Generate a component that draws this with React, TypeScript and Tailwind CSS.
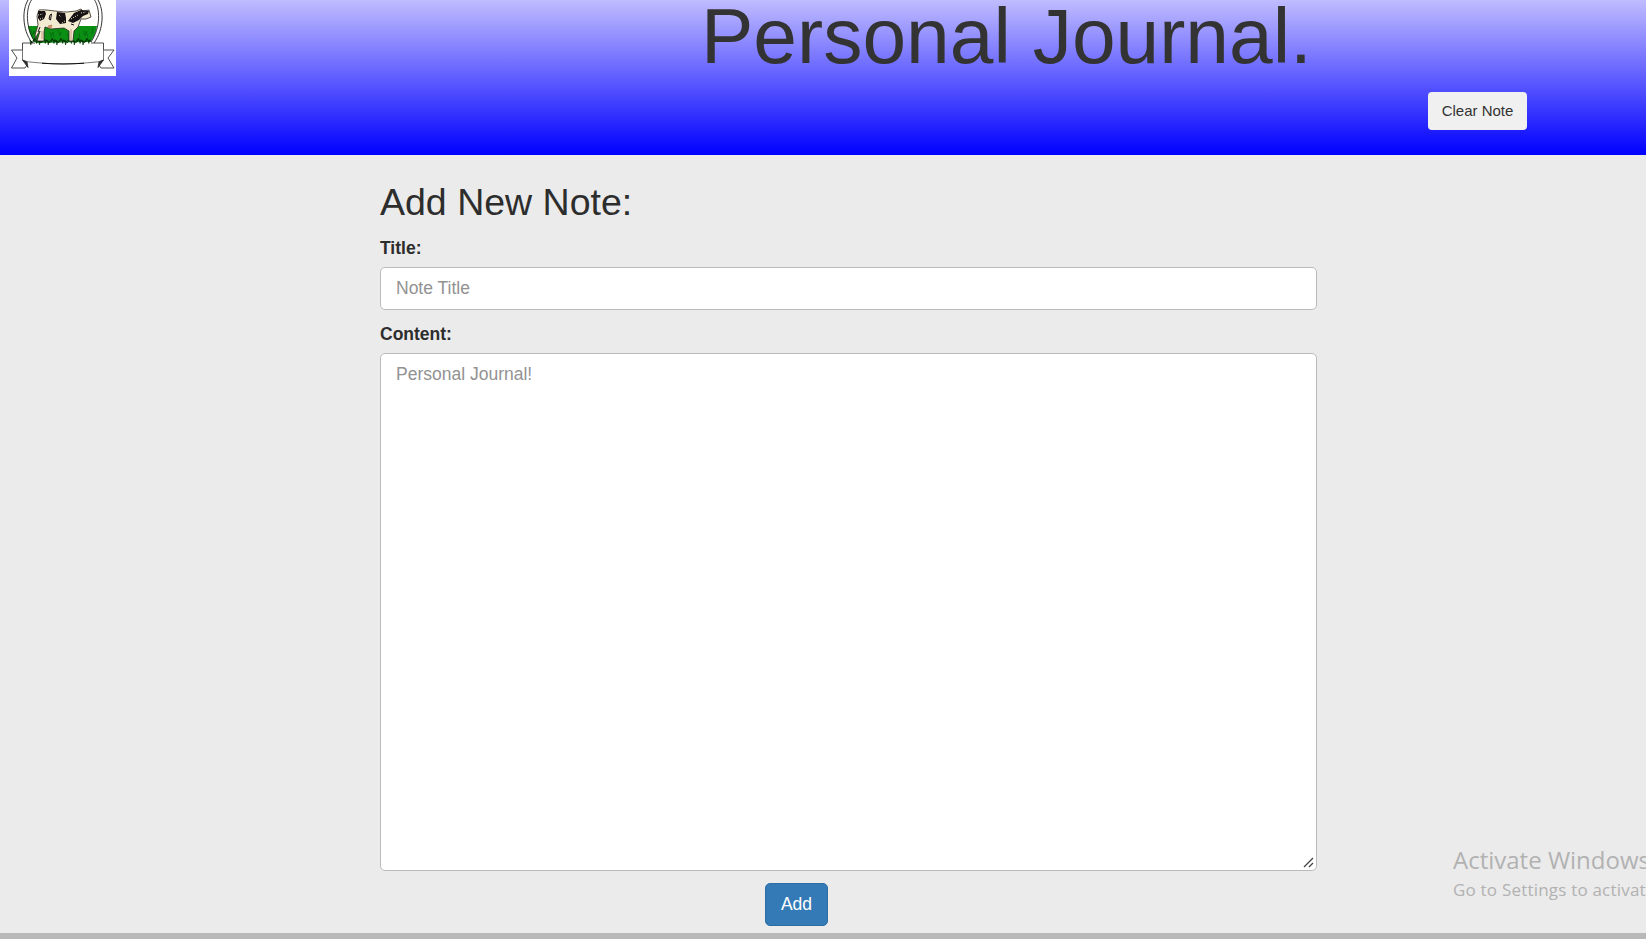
import React from "react";

const blades = Array.from({ length: 21 }, (_, i) => {
  const x = 21 + i * 2.9;
  const h = i % 3 === 0 ? 5 : i % 3 === 1 ? 2 : 3.5;
  return `M${x} 40l.8 ${h}l1-4l1 2z`;
}).join("");

function Logo() {
  return (
    <svg className="block h-[76px] w-[107px] bg-white" viewBox="0 0 107 76" fill="none">
      <path d="M19 26H88C87 33 84 39 81 42L27 43C23 39 20 33 19 26Z" fill="#0a8f14" />
      <path d="M22 30l2 5l1-4l2 6M41 32l1 5l2-5l1 6M49 30l2 6l1-4M58 33l2 6M74 30l2 6l1-5l2 6M70 33l1 6M84 28l-1 6" stroke="#056b0c" strokeWidth=".8" />
      <path d="M22.500 0C17 8 16 27 26 42M85.500 0C91 8 92 27 82 42" stroke="#222" strokeWidth=".9" />
      <path d="M19 0C13 10 13 29 23 43M89 0C95 10 95 29 85 43" stroke="#333" strokeWidth="1" />
      <path d={blades} fill="#063d08" stroke="#042e05" strokeWidth=".6" />
      <path
        d="M30 10C36 9 49 12 58 12L67 11L72 9L74 11L80 10L82 17L77 19L72 19L69 27L65 31L64 41H60L60 31L55 28L42 29L36 27L35 32L35 41H28L31 31L28 35L27 39L26 35L29 25L28 16Z"
        fill="#f3ead2"
        stroke="#2b2420"
        strokeWidth=".8"
      />
      <path d="M29 11L36 11L37 14L35 19L31 21L29 18ZM48 12L56 13L57 18L57 23L51 24L47 19ZM59 21L65 13L72 10L80 11L79 14L74 16L70 20L64 23Z" fill="#171214" />
      <path d="M41 15l1.500-1l-1 6l-1.500-1zM29 32l2-5M62 24l3 1" stroke="#171214" />
      <path d="M29 15l5-1M31 19l3-1M50 15l2 2M53 23l3-2M62 19l7-4M72 13l5-1M58 17l3-2" stroke="#eee3ce" strokeDasharray="1 1.4" />
      <path d="M39 26l4-1l-1 3l-2 0zM62 29v11M33 31v8" fill="#d8925d" stroke="#b88a6b" strokeWidth=".8" />
      <path d="M26 43H13.500V50H2.500L8 58L2.500 68H16L18 65M82 43H94.500V50H105L99 58L105 68H92L90 65" stroke="#222" strokeWidth=".8" />
      <path d="M13.500 49.500V60C16 61 19 62 21 62M94.500 49.500V60C92 61 89 62 87 62M21 62C45 64.500 63 64.500 87 62" stroke="#555" strokeWidth=".8" />
      <path d="M33 63.200C47 64.300 61 64.300 75 63.200" stroke="#111" strokeWidth="1.100" />
      <path d="M13.500 60L19 67.500L18 62ZM94.500 60L89 67.500L90 62Z" fill="#333" stroke="#222" strokeWidth=".8" />
    </svg>
  );
}

export default function App() {
  return (
    <div className="relative flex h-[939px] w-full max-w-[1646px] flex-col overflow-hidden bg-[#ebebeb] font-['Liberation_Sans',Arial,sans-serif] text-[#2d2d2d]">
      <header className="flex h-[155px] shrink-0 items-start bg-[linear-gradient(to_bottom,#c0bcff,#0000ff)] pl-[9px]">
        <Logo />
        <div className="flex flex-1 flex-col">
          <h1 className="-mt-[10px] ml-[585px] h-[102px] text-[78.500px] leading-[92px] whitespace-nowrap text-[#333]">Personal Journal.</h1>
          <button className="ml-[1312px] h-[38px] w-[99px] rounded bg-[#f0f0f0] pb-[2px] text-[15px] leading-none whitespace-nowrap text-[#333]">
            Clear Note
          </button>
        </div>
      </header>
      <main className="ml-[380px] flex h-[778px] w-[937px] shrink-0 flex-col text-[17.500px]">
        <h2 className="mt-[27px] h-[41px] text-[37.500px] leading-[41px]">Add New Note:</h2>
        <label htmlFor="title" className="mt-[13px] h-[25px] leading-[25px] font-bold">Title:</label>
        <input
          id="title"
          placeholder="Note Title"
          className="mt-[6px] h-[43px] shrink-0 rounded-[5px] border border-[#bbb] bg-white px-[15px] outline-none placeholder:text-[#929292]"
        />
        <label htmlFor="content" className="mt-[12px] h-[25px] leading-[25px] font-bold">Content:</label>
        <div className="relative mt-[6px] flex h-[518px] shrink-0">
          <textarea
            id="content"
            placeholder="Personal Journal!"
            className="flex-1 resize-none rounded-[5px] border border-[#bbb] bg-white px-[15px] py-[8px] leading-[25px] outline-none placeholder:text-[#929292]"
          />
          <svg className="pointer-events-none absolute right-[3px] bottom-[3px] h-[11px] w-[11px]" viewBox="0 0 11 11" fill="none" stroke="#444" strokeWidth="1.300">
            <path d="M1 10L10 1M6 10L10 6" />
          </svg>
        </div>
        <button className="mt-[12px] ml-[385px] h-[43px] w-[63px] rounded-[5px] border border-[#2e6da4] bg-[#337ab7] leading-none text-white">Add</button>
      </main>
      <footer className="h-[6px] shrink-0 bg-[#b9b9b9]" />
      <div className="pointer-events-none absolute top-[842px] left-[1453px] font-['Open_Sans','Noto_Sans',sans-serif] whitespace-nowrap text-[#b2b2b2]">
        <p className="text-[24px] leading-[36px]">Activate Windows</p>
        <p className="text-[17px] leading-[24px] tracking-[0.200px]">Go to Settings to activat</p>
      </div>
    </div>
  );
}
